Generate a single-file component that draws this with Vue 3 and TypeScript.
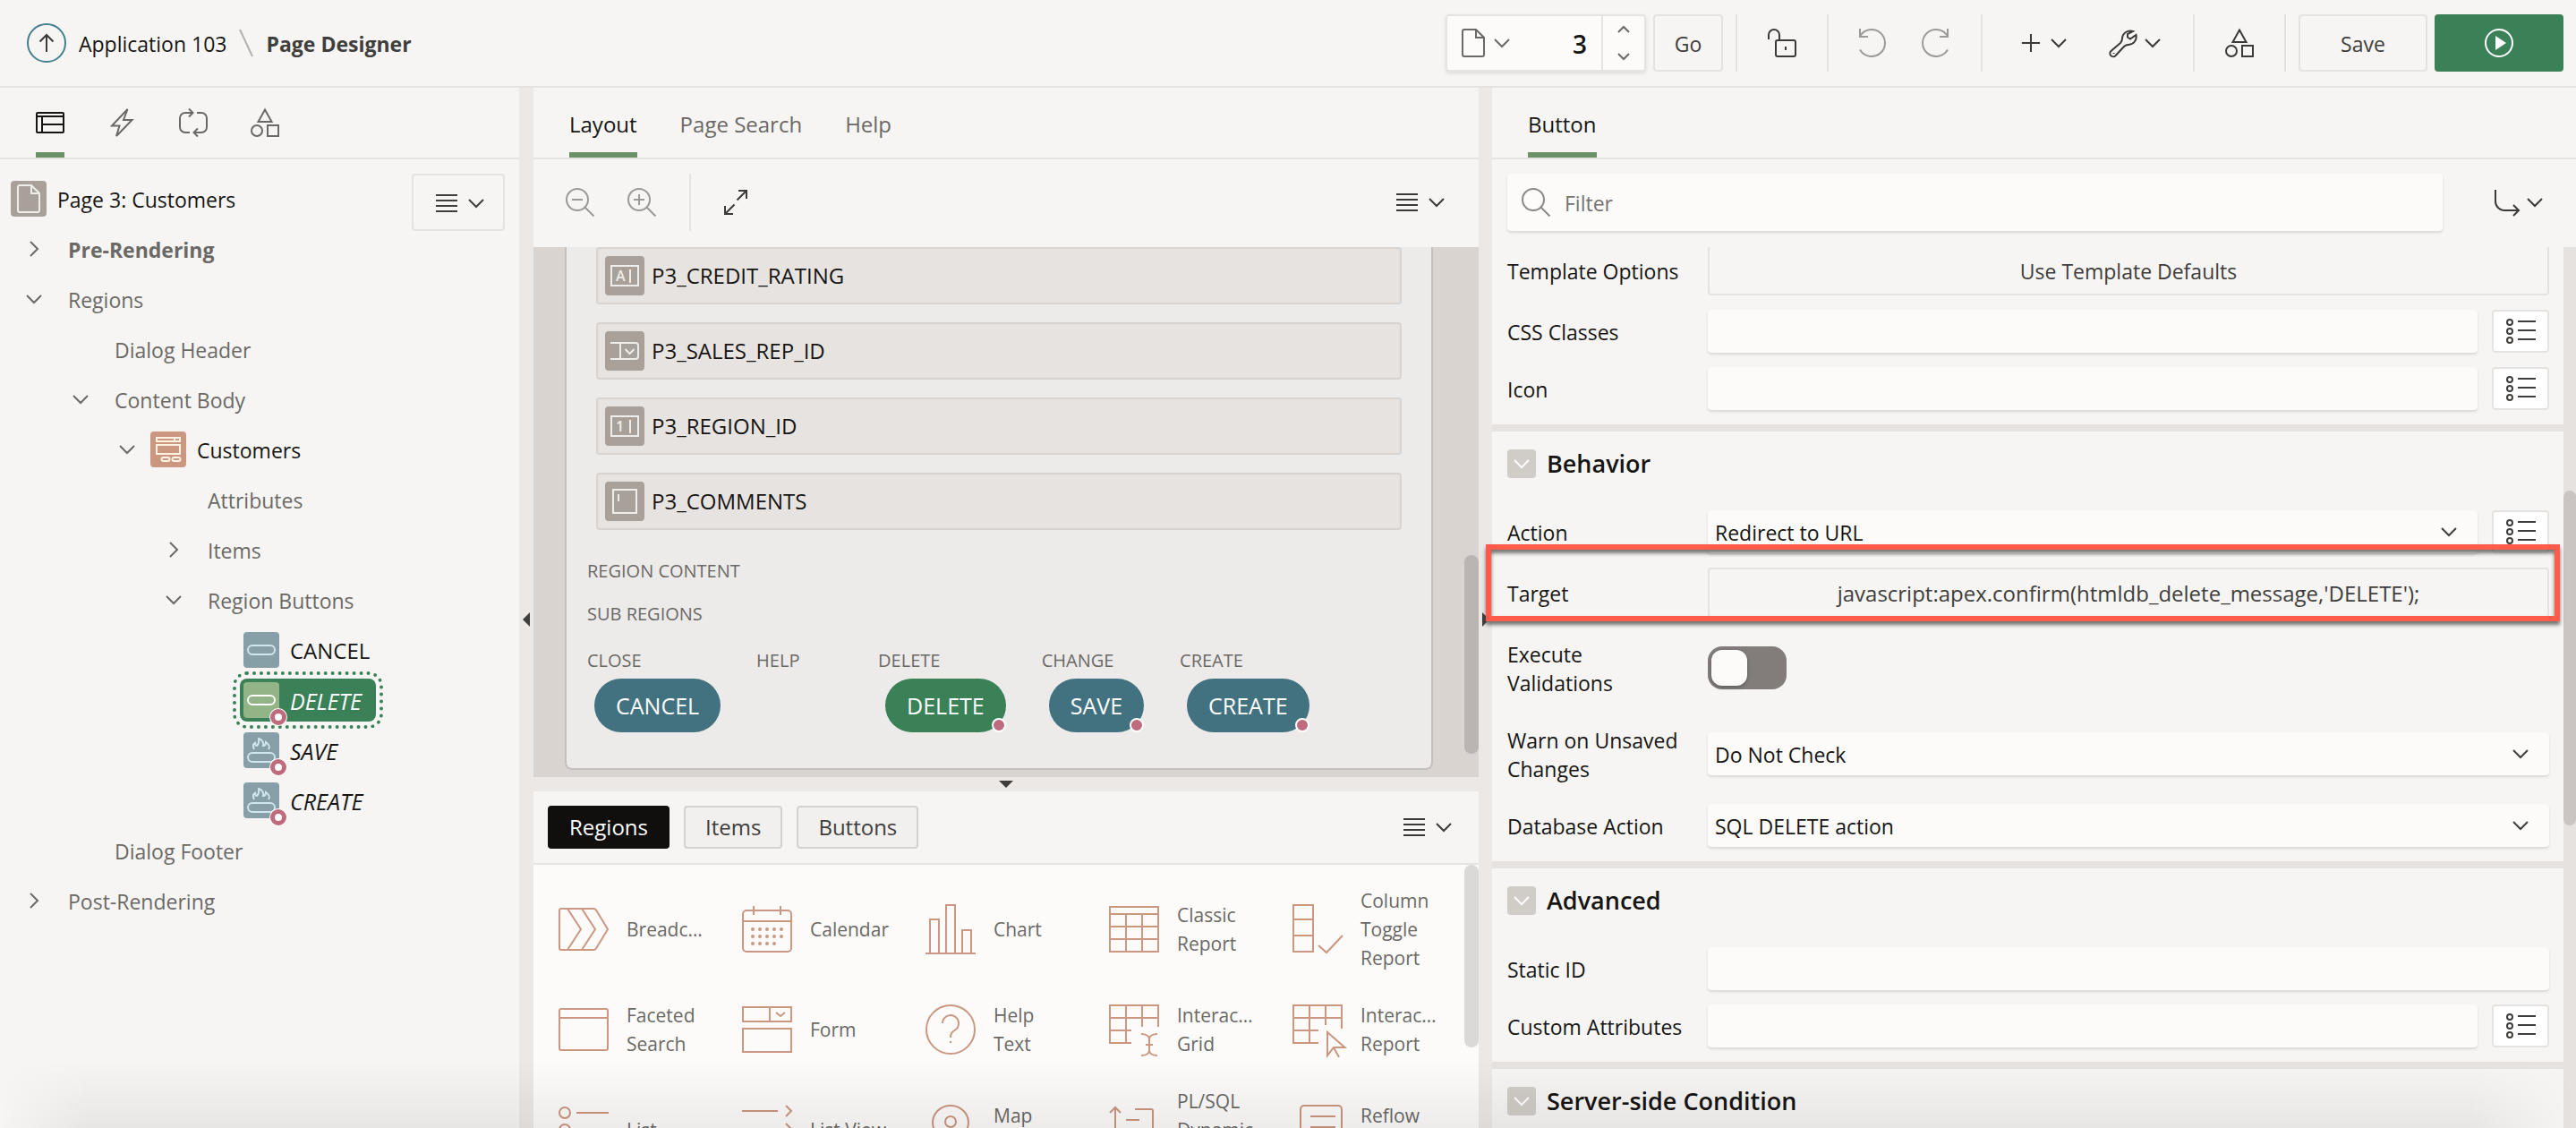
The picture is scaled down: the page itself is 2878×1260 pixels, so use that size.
<script setup lang="ts">
import { h, ref } from 'vue'

type IconDef = { w: number; h: number; d: string }

const circle = (cx: number, cy: number, r: number): string =>
  `M${cx - r} ${cy}a${r} ${r} 0 1 0 ${2 * r} 0a${r} ${r} 0 1 0 ${-2 * r} 0Z`

const dots = [28, 36, 44]
  .flatMap((y, row) => [12, 20, 28, 36, 44].slice(0, row === 2 ? 4 : 5).map((x) => circle(x, y, 1)))
  .join('')

const icons: Record<string, IconDef> = {
  up: { w: 44, h: 44, d: 'M22 32V13M14.5 20.5L22 13l7.5 7.5' },
  doc: { w: 26, h: 32, d: 'M3 1H16L25 10V29a2 2 0 0 1-2 2H3a2 2 0 0 1-2-2V3a2 2 0 0 1 2-2ZM16 1V10H25' },
  down: { w: 18, h: 10, d: 'M1 1l8 8 8-8' },
  right: { w: 10, h: 18, d: 'M1 1l8 8-8 8' },
  spinUp: { w: 14, h: 8, d: 'M1 7l6-6 6 6' },
  spinDown: { w: 14, h: 8, d: 'M1 1l6 6 6-6' },
  lock: { w: 32, h: 32, d: 'M1 12V7a6 6 0 0 1 12 0V13M11 13H29a2 2 0 0 1 2 2V29a2 2 0 0 1-2 2H11a2 2 0 0 1-2-2V15a2 2 0 0 1 2-2ZM20 20v4' },
  undo: { w: 30, h: 32, d: 'M1 0V9H10M1 8.5A15 15 0 1 1 1 23.5' },
  redo: { w: 30, h: 32, d: 'M29 0V9H20M29 8.5A15 15 0 1 0 29 23.5' },
  plus: { w: 20, h: 20, d: 'M10 0V20M0 10H20' },
  wrench: { w: 32, h: 32, d: 'M27 3A9 9 0 0 0 15 11C15 14 14.500 14.500 13 16L2.500 25A3.600 3.600 0 0 0 7.500 30.300L17 20C18.500 18.500 19 18.500 22 18A9 9 0 0 0 30.500 7L24 11.500L21 9.500V6ZM5.500 27v1' },
  shapes: { w: 32, h: 32, d: 'M16 1.500L23.500 15H8.500ZM19 19H31V31H19Z' + circle(7, 25, 6) },
  play: { w: 32, h: 32, d: circle(16, 16, 15) },
  layout: { w: 32, h: 32, d: 'M2 5H30a1 1 0 0 1 1 1V26a1 1 0 0 1-1 1H2a1 1 0 0 1-1-1V6a1 1 0 0 1 1-1ZM1 9H31M7 9V27M7 18H31' },
  bolt: { w: 32, h: 32, d: 'M22.500 1L5 19.500H13.500L10 31L27.500 13H18Z' },
  loop: { w: 32, h: 32, d: 'M12 27H7a6 6 0 0 1-6-6V11a6 6 0 0 1 6-6H15M11 0.500L15.500 5 11 9.500M20 5h5a6 6 0 0 1 6 6v10a6 6 0 0 1-6 6H17M21 22.500L16.500 27 21 31.500' },
  menu: { w: 24, h: 20, d: 'M0 1H24M0 7H24M0 13H24M0 19H24' },
  search: { w: 32, h: 32, d: circle(13, 13, 12) + 'M21.500 21.500L31.500 31.500' },
  zoomOut: { w: 32, h: 32, d: circle(13, 13, 12) + 'M21.500 21.500L31.500 31.500M7 13H19' },
  zoomIn: { w: 32, h: 32, d: circle(13, 13, 12) + 'M21.500 21.500L31.500 31.500M7 13H19M13 7V19' },
  expand: { w: 26, h: 28, d: 'M16 1H25V10M25 1L14.500 11.500M1 18V27H10M1 27L11.500 16.500' },
  goto: { w: 28, h: 28, d: 'M1 0V13A10 10 0 0 0 11 23H27M21 17l6 6-6 6' },
  list: { w: 34, h: 30, d: circle(5, 5, 3) + circle(5, 15, 3) + circle(5, 25, 3) + 'M14 4H34M14 14H34M14 24H34' },
  region: { w: 40, h: 40, d: 'M7 7H33V11H7ZM27 7V11M7 15H33V25H7ZM14.500 29H19.500a2 2 0 0 1 0 4H14.500a2 2 0 0 1 0-4ZM26.500 29H31.500a2 2 0 0 1 0 4H26.500a2 2 0 0 1 0-4Z' },
  button: { w: 40, h: 40, d: 'M10 15H30a5 5 0 0 1 0 10H10a5 5 0 0 1 0-10Z' },
  hotButton: { w: 40, h: 40, d: 'M10 23H30a5 5 0 0 1 0 10H10a5 5 0 0 1 0-10ZM12 19C10 15 11 13 13 12C13 14 14 15 15 15C18 12 17 9 17 7C21 8 23 12 22 15C24 15 25 13 25 11C29 14 30 16 28 19' },
  text: { w: 44, h: 44, d: 'M7 11H37V33H7ZM28 15V30' },
  select: { w: 44, h: 44, d: 'M6 13H34a3 3 0 0 1 3 3V28a3 3 0 0 1-3 3H6M17 13V31M22.500 20l5 5 5-5' },
  area: { w: 44, h: 44, d: 'M9 9H35V35H9ZM15 14V22' },
  breadcrumb: { w: 56, h: 56, d: 'M3 5H39Q41 5 42 6.500L55 28 42 49.500Q41 51 39 51H3a2 2 0 0 1-2-2V7a2 2 0 0 1 2-2ZM10 5L25 28 10 51M26 5L41 28 26 51' },
  calendar: { w: 56, h: 56, d: 'M5 7H51a4 4 0 0 1 4 4V49a4 4 0 0 1-4 4H5a4 4 0 0 1-4-4V11a4 4 0 0 1 4-4ZM1 19H55M13 2V12M43 2V12' + dots },
  chart: { w: 56, h: 56, d: 'M0 55H56M5 55V17H15V55M23 55V1H33V55M41 55V29H51V55' },
  classic: { w: 56, h: 56, d: 'M1 3H55V53H1ZM1 11H55M1 25H55M1 39H55M19 11V53M37 11V53' },
  columns: { w: 56, h: 56, d: 'M1 1H23V53H1ZM1 17H23M1 35H23M29 46l9 8L56 35' },
  faceted: { w: 56, h: 56, d: 'M3 5H53a2 2 0 0 1 2 2V49a2 2 0 0 1-2 2H3a2 2 0 0 1-2-2V7a2 2 0 0 1 2-2ZM1 15H55' },
  form: { w: 56, h: 56, d: 'M1 3H55V19H1ZM31 3V19M38 9l5 4 5-4M1 27H55V53H1Z' },
  help: { w: 56, h: 56, d: circle(28, 28, 27) + 'M19 21A9 9 0 1 1 33 28.500C30 30.500 28 32 28 37M28 41v2' },
  grid: { w: 56, h: 56, d: 'M25 43H1V1H55V25M1 15H55M1 29H25M19 1V43M37 1V25M36 33C41 33 45 35 45 39V51C45 55 41 57 36 57M54 33C49 33 45 35 45 39M45 51C45 55 49 57 54 57M41 45H49' },
  report: { w: 56, h: 56, d: 'M29 43H1V1H55V27M1 15H55M1 29H29M19 1V43M37 1V23M39 31V57L46 48H58.500ZM46 48L52 59' },
  listRegion: { w: 56, h: 56, d: circle(7, 9, 6) + circle(7, 28, 6) + circle(7, 47, 6) + 'M20 9H56M20 28H56M20 47H56' },
  listView: { w: 56, h: 56, d: 'M0 7H40M49 1l6 6-6 6M0 27H40M49 21l6 6-6 6M0 47H40M49 41l6 6-6 6' },
  map: { w: 56, h: 56, d: 'M28 55C22 44 8 32 8 20A20 19 0 0 1 48 20C48 32 34 44 28 55Z' + circle(28, 19, 6) },
  dynamic: { w: 56, h: 56, d: 'M7 50V2M1 9l6-6 6 6M29 5H47a2 2 0 0 1 2 2V40M19 17H34M19 29H34' },
  reflow: { w: 56, h: 56, d: 'M13 1H51a4 4 0 0 1 4 4V51a4 4 0 0 1-4 4H13a4 4 0 0 1-4-4V5a4 4 0 0 1 4-4ZM20 13H48M20 25H48M20 37H48' },
}

const Icon = (props: { name: string }) => {
  const icon = icons[props.name]
  return h(
    'svg',
    {
      width: icon.w,
      height: icon.h,
      viewBox: `0 0 ${icon.w} ${icon.h}`,
      fill: 'none',
      stroke: 'currentColor',
      'stroke-width': 2,
      'aria-hidden': 'true',
    },
    [h('path', { d: icon.d })],
  )
}

type TreeNode = {
  label: string
  level: number
  toggle?: 'down' | 'right'
  icon?: string
  bold?: boolean
  italic?: boolean
  badge?: boolean
  selected?: boolean
}

const nodes: TreeNode[] = [
  { label: 'Pre-Rendering', level: 0, toggle: 'right', bold: true },
  { label: 'Regions', level: 0, toggle: 'down' },
  { label: 'Dialog Header', level: 1 },
  { label: 'Content Body', level: 1, toggle: 'down' },
  { label: 'Customers', level: 2, toggle: 'down', icon: 'region' },
  { label: 'Attributes', level: 3 },
  { label: 'Items', level: 3, toggle: 'right' },
  { label: 'Region Buttons', level: 3, toggle: 'down' },
  { label: 'CANCEL', level: 4, icon: 'button' },
  { label: 'DELETE', level: 4, icon: 'button', italic: true, badge: true, selected: true },
  { label: 'SAVE', level: 4, icon: 'hotButton', italic: true, badge: true },
  { label: 'CREATE', level: 4, icon: 'hotButton', italic: true, badge: true },
  { label: 'Dialog Footer', level: 1 },
  { label: 'Post-Rendering', level: 0, toggle: 'right' },
]

const treeTabs = ['layout', 'bolt', 'loop', 'shapes']

const items = [
  { name: 'P3_CREDIT_RATING', icon: 'text', mark: 'A' },
  { name: 'P3_SALES_REP_ID', icon: 'select', mark: '' },
  { name: 'P3_REGION_ID', icon: 'text', mark: '1' },
  { name: 'P3_COMMENTS', icon: 'area', mark: '' },
]

const positions = [
  { slot: 'CLOSE', button: 'CANCEL', badge: false },
  { slot: 'HELP', button: '', badge: false },
  { slot: 'DELETE', button: 'DELETE', badge: true },
  { slot: 'CHANGE', button: 'SAVE', badge: true },
  { slot: 'CREATE', button: 'CREATE', badge: true },
]

const gallery = [
  { icon: 'breadcrumb', lines: ['Breadc…'] },
  { icon: 'calendar', lines: ['Calendar'] },
  { icon: 'chart', lines: ['Chart'] },
  { icon: 'classic', lines: ['Classic', 'Report'] },
  { icon: 'columns', lines: ['Column', 'Toggle', 'Report'] },
  { icon: 'faceted', lines: ['Faceted', 'Search'] },
  { icon: 'form', lines: ['Form'] },
  { icon: 'help', lines: ['Help', 'Text'] },
  { icon: 'grid', lines: ['Interac…', 'Grid'] },
  { icon: 'report', lines: ['Interac…', 'Report'] },
  { icon: 'listRegion', lines: ['List'] },
  { icon: 'listView', lines: ['List View'] },
  { icon: 'map', lines: ['Map', '\u00a0'] },
  { icon: 'dynamic', lines: ['PL/SQL', 'Dynamic', '\u00a0'] },
  { icon: 'reflow', lines: ['Reflow', '\u00a0'] },
]

type Field = { id: string; label: string; kind: 'button' | 'text' | 'select' | 'switch'; value?: string; picker?: boolean }
type Section = { title: string; fields: Field[] }

const sections: Section[] = [
  {
    title: '',
    fields: [
      { id: 'template-options', label: 'Template Options', kind: 'button', value: 'Use Template Defaults' },
      { id: 'css-classes', label: 'CSS Classes', kind: 'text', picker: true },
      { id: 'icon', label: 'Icon', kind: 'text', picker: true },
    ],
  },
  {
    title: 'Behavior',
    fields: [
      { id: 'action', label: 'Action', kind: 'select', value: 'Redirect to URL', picker: true },
      { id: 'target', label: 'Target', kind: 'button', value: "javascript:apex.confirm(htmldb_delete_message,'DELETE');" },
      { id: 'validations', label: 'Execute Validations', kind: 'switch' },
      { id: 'warn', label: 'Warn on Unsaved Changes', kind: 'select', value: 'Do Not Check' },
      { id: 'db-action', label: 'Database Action', kind: 'select', value: 'SQL DELETE action' },
    ],
  },
  {
    title: 'Advanced',
    fields: [
      { id: 'static-id', label: 'Static ID', kind: 'text' },
      { id: 'attributes', label: 'Custom Attributes', kind: 'text', picker: true },
    ],
  },
  { title: 'Server-side Condition', fields: [] },
]

const pageNumber = ref('3')
const filter = ref('')
const validations = ref(false)
</script>

<template>
  <div class="app">
    <header class="header">
      <nav class="crumbs" aria-label="Breadcrumb">
        <a href="#" class="up" aria-label="Up"><Icon name="up" /></a>
        <a href="#" class="crumb">Application 103</a>
        <svg class="slash" width="16" height="32" viewBox="0 0 16 32" fill="none" stroke="currentColor" stroke-width="2" aria-hidden="true"><path d="M1 1L15 31" /></svg>
        <span class="crumb current">Page Designer</span>
      </nav>
      <div class="tools">
        <div class="page-select">
          <button class="page-menu" aria-label="Page list"><Icon name="doc" /><Icon name="down" /></button>
          <input v-model="pageNumber" class="page-number" aria-label="Page number" />
          <div class="spin">
            <button aria-label="Next page"><Icon name="spinUp" /></button>
            <button aria-label="Previous page"><Icon name="spinDown" /></button>
          </div>
        </div>
        <button class="btn go">Go</button>
        <span class="rule"></span>
        <button class="tool lock" aria-label="Lock page"><Icon name="lock" /></button>
        <span class="rule"></span>
        <button class="tool dim undo" aria-label="Undo"><Icon name="undo" /></button>
        <button class="tool dim redo" aria-label="Redo"><Icon name="redo" /></button>
        <span class="rule"></span>
        <button class="tool create" aria-label="Create"><Icon name="plus" /><Icon name="down" /></button>
        <button class="tool utilities" aria-label="Utilities"><Icon name="wrench" /><Icon name="down" /></button>
        <span class="rule"></span>
        <button class="tool shared" aria-label="Shared components"><Icon name="shapes" /></button>
        <span class="rule"></span>
        <button class="btn save">Save</button>
        <button class="run" aria-label="Save and run page">
          <Icon name="play" /><span class="triangle"></span>
        </button>
      </div>
    </header>

    <main class="panes">
      <section class="pane">
        <div class="tabs">
          <button v-for="(tab, i) in treeTabs" :key="tab" class="icon-tab" :class="{ active: i === 0 }" :aria-label="tab">
            <Icon :name="tab" />
          </button>
        </div>
        <div class="tree">
          <div class="root">
            <div class="node strong">
              <span class="node-icon page"><Icon name="doc" /></span>
              <span class="node-label">Page 3: Customers</span>
            </div>
            <button class="btn tree-menu" aria-label="Tree menu"><Icon name="menu" /><Icon name="down" /></button>
          </div>
          <ul>
            <li v-for="node in nodes" :key="node.label + node.level" :class="'level-' + node.level">
              <span class="toggle">
                <button v-if="node.toggle" :aria-label="'Toggle ' + node.label"><Icon :name="node.toggle" /></button>
              </span>
              <span class="node" :class="{ strong: node.icon, caps: node.level === 4, bold: node.bold, italic: node.italic, selected: node.selected, plain: !node.icon }">
                <span v-if="node.icon" class="node-icon" :class="node.icon">
                  <Icon :name="node.icon" />
                  <i v-if="node.badge" class="ring"></i>
                </span>
                <span class="node-label">{{ node.label }}</span>
              </span>
            </li>
          </ul>
        </div>
      </section>

      <div class="splitter"><i class="arrow left"></i></div>

      <section class="pane">
        <div class="tabs">
          <button class="tab active">Layout</button>
          <button class="tab">Page Search</button>
          <button class="tab">Help</button>
        </div>
        <div class="layout-bar">
          <button class="tool dim" aria-label="Zoom out"><Icon name="zoomOut" /></button>
          <button class="tool dim" aria-label="Zoom in"><Icon name="zoomIn" /></button>
          <span class="rule"></span>
          <button class="tool" aria-label="Expand"><Icon name="expand" /></button>
          <button class="tool menu" aria-label="Layout menu"><Icon name="menu" /><Icon name="down" /></button>
        </div>
        <div class="canvas">
          <div class="card">
            <div class="items">
              <div v-for="item in items" :key="item.name" class="item">
                <span class="item-icon"><Icon :name="item.icon" /><b v-if="item.mark">{{ item.mark }}</b></span>
                <span>{{ item.name }}</span>
              </div>
            </div>
            <p class="slot">REGION CONTENT</p>
            <p class="slot">SUB REGIONS</p>
            <div class="positions">
              <div v-for="pos in positions" :key="pos.slot" class="position">
                <span class="slot-name">{{ pos.slot }}</span>
                <button v-if="pos.button" class="pill" :class="{ chosen: pos.button === 'DELETE' }">
                  {{ pos.button }}<i v-if="pos.badge" class="dot"></i>
                </button>
              </div>
            </div>
          </div>
          <i class="thumb"></i>
        </div>
        <div class="h-splitter"><i class="arrow bottom"></i></div>
        <div class="gallery-bar">
          <button class="chip on">Regions</button>
          <button class="chip">Items</button>
          <button class="chip">Buttons</button>
          <button class="tool menu" aria-label="Gallery menu"><Icon name="menu" /><Icon name="down" /></button>
        </div>
        <div class="gallery">
          <div v-for="(entry, i) in gallery" :key="i" class="entry">
            <Icon :name="entry.icon" />
            <span class="entry-name"><span v-for="line in entry.lines" :key="line">{{ line }}</span></span>
          </div>
          <i class="thumb light"></i>
        </div>
      </section>

      <div class="splitter"><i class="arrow right"></i></div>

      <section class="pane">
        <div class="tabs"><button class="tab active">Button</button></div>
        <div class="filter-bar">
          <label class="filter">
            <Icon name="search" />
            <input v-model="filter" placeholder="Filter" aria-label="Filter properties" />
          </label>
          <button class="tool" aria-label="Go to group"><Icon name="goto" /><Icon name="down" /></button>
        </div>
        <div class="properties">
          <div class="groups">
            <section v-for="section in sections" :key="section.title" class="group">
              <h2 v-if="section.title">
                <button class="collapse" :aria-label="'Collapse ' + section.title"><Icon name="down" /></button>
                {{ section.title }}
              </h2>
              <div v-for="field in section.fields" :key="field.id" class="field" :class="{ marked: field.id === 'target' }">
                <label :for="field.id">{{ field.label }}</label>
                <div class="control">
                  <button v-if="field.kind === 'button'" :id="field.id" class="btn wide">{{ field.value }}</button>
                  <input v-else-if="field.kind === 'text'" :id="field.id" class="box" type="text" />
                  <span v-else-if="field.kind === 'select'" class="select">
                    <select :id="field.id" class="box"><option>{{ field.value }}</option></select>
                    <Icon name="down" />
                  </span>
                  <input v-else :id="field.id" v-model="validations" class="switch" type="checkbox" />
                  <button v-if="field.picker" class="picker" :aria-label="'Pick ' + field.label"><Icon name="list" /></button>
                </div>
              </div>
            </section>
          </div>
          <div class="track"><i></i></div>
        </div>
      </section>
    </main>
    <div class="fade"></div>
  </div>
</template>

<style>
html,
body {
  background: #f6f5f3;
}
</style>

<style scoped>
.app {
  position: relative;
  display: flex;
  flex-direction: column;
  height: 100vh;
  overflow: hidden;
  background: #f6f5f3;
  color: #161513;
  font-family: "Open Sans", "Noto Sans", sans-serif;
  font-size: 23px;
  line-height: 32px;
}
.app *,
.app {
  box-sizing: border-box;
}
button,
input,
select {
  font: inherit;
  color: inherit;
  margin: 0;
  padding: 0;
  border: 0;
  background: none;
}
button {
  display: flex;
  align-items: center;
  justify-content: center;
}
svg {
  flex: none;
  overflow: visible;
}

/* Header */
.header {
  display: flex;
  justify-content: space-between;
  flex: none;
  height: 98px;
  padding: 16px 14px 16px 30px;
  border-bottom: 2px solid #e5e3e1;
}
.crumbs {
  display: flex;
  align-items: center;
}
.up {
  width: 44px;
  height: 44px;
  border: 2px solid #427f8f;
  border-radius: 50%;
  color: #3c3a38;
}
.up svg {
  margin: -2px;
}
.crumb {
  margin-left: 14px;
  padding-top: 2px;
  color: #161513;
  text-decoration: none;
}
.slash {
  margin-left: 14px;
  color: #b3b1af;
}
.crumb.current {
  font-weight: 700;
  color: #403e3c;
}
.tools {
  display: flex;
  height: 64px;
  color: #3c3a38;
}
.page-select {
  display: flex;
  width: 224px;
  border: 2px solid #e6e4e2;
  border-radius: 4px;
  background: #fcfbfa;
  box-shadow: 0 2px 4px #0000001a;
}
.page-menu {
  gap: 10px;
  margin-left: 16px;
  color: #6b6966;
}
.page-number {
  flex: 1;
  min-width: 0;
  padding: 2px 16px 0 0;
  color: #161513;
  font-size: 28px;
  font-weight: 600;
  text-align: right;
}
.spin {
  display: flex;
  flex-direction: column;
  width: 48px;
  border-left: 2px solid #e6e4e2;
  color: #6b6966;
}
.spin button {
  flex: 1;
}
.btn {
  padding-top: 2px;
  border: 2px solid #e5e3e1;
  border-radius: 4px;
  color: #403e3c;
}
.go {
  width: 78px;
  margin: 0 14px 0 8px;
}
.rule {
  width: 2px;
  height: 64px;
  background: #e5e3e1;
}
.dim {
  color: #9c9a98;
}
.lock,
.shared {
  width: 100px;
}
.undo {
  margin-left: 34px;
}
.redo {
  margin: 0 36px 0 40px;
}
.create,
.utilities {
  gap: 12px;
}
.create {
  margin: 0 47px 0 44px;
}
.utilities {
  gap: 8px;
  margin-right: 36px;
}
.save {
  width: 144px;
  margin: 0 8px 0 14px;
}
.run {
  position: relative;
  width: 144px;
  border-radius: 4px;
  background: #3a8157;
  color: #fff;
}
.triangle {
  position: absolute;
  left: 68px;
  top: 24px;
  border: 8px solid transparent;
  border-left: 12px solid #fff;
  border-right: 0;
}

/* Panes */
.panes {
  display: grid;
  grid-template-columns: 580fr 16px 1056fr 15px 1211fr;
  flex: 1;
  min-height: 0;
}
.pane {
  display: flex;
  flex-direction: column;
  min-width: 0;
  min-height: 0;
}
.splitter,
.h-splitter {
  display: flex;
  justify-content: center;
  background: #ece8e5;
}
.arrow {
  width: 0;
  height: 0;
  border: 8px solid transparent;
}
.arrow.left {
  margin-top: 586px;
  border-right-color: #403e3c;
  border-left: 0;
}
.arrow.right {
  margin-top: 586px;
  border-left-color: #403e3c;
  border-right: 0;
}
.arrow.bottom {
  margin-top: 4px;
  border-top-color: #403e3c;
  border-bottom: 0;
}
.tabs {
  display: flex;
  flex: none;
  gap: 48px;
  height: 80px;
  padding: 0 40px;
  border-bottom: 2px solid #e5e3e1;
}
.tab,
.icon-tab {
  border-bottom: 6px solid transparent;
  color: #6b6966;
}
.tab {
  padding-top: 10px;
  font-size: 24px;
}
.icon-tab {
  padding-top: 8px;
  padding-bottom: 2px;
}
.tab.active,
.icon-tab.active {
  border-bottom-color: #6b9267;
  color: #161513;
}

/* Tree */
.tree {
  padding-top: 16px;
  color: #6b6966;
}
.root {
  display: flex;
  justify-content: space-between;
  height: 56px;
  padding: 0 16px 0 12px;
}
.tree-menu {
  gap: 12px;
  width: 104px;
  height: 64px;
  padding-left: 4px;
}
ul {
  margin: 0;
  padding: 0;
  list-style: none;
}
li {
  display: flex;
  height: 56px;
}
.level-1 {
  padding-left: 52px;
}
.level-2 {
  padding-left: 104px;
}
.level-3 {
  padding-left: 156px;
}
.level-4 {
  padding-left: 208px;
}
.toggle {
  display: flex;
  align-items: center;
  justify-content: center;
  width: 64px;
  padding-left: 12px;
}
.node {
  display: flex;
  align-items: center;
  gap: 12px;
}
.node-label {
  padding-top: 2px;
}
.node.plain {
  padding-left: 12px;
}
.strong {
  color: #161513;
}
.bold {
  font-weight: 700;
}
.caps {
  font-size: 24px;
}
.italic {
  font-size: 25px;
  font-style: italic;
}
.node-icon {
  position: relative;
  display: flex;
  align-items: center;
  justify-content: center;
  width: 40px;
  height: 40px;
  border-radius: 4px;
  background: #87a0a7;
  color: #cfe6ee;
}
.node-icon.page {
  background: #a8a199;
  color: #efedea;
}
.node-icon.region {
  background: #cb9780;
  color: #fdf3e0;
}
.ring {
  position: absolute;
  right: -8px;
  bottom: -8px;
  width: 18px;
  height: 18px;
  border: 5px solid #bf6a7d;
  border-radius: 50%;
  background: #fff;
  box-shadow: 0 0 0 1px #fff;
}
.selected {
  height: 48px;
  margin: 4px 0 4px -4px;
  padding: 4px 16px 4px 4px;
  border-radius: 8px;
  background: #3a8157;
  color: #fff;
  outline: 4px dotted #3a8157;
  outline-offset: 4px;
}
.selected .node-icon {
  background: #93b487;
  color: #fff;
}

/* Layout editor */
.layout-bar {
  display: flex;
  flex: none;
  gap: 37px;
  height: 98px;
  padding: 16px 38px 18px 36px;
  color: #3c3a38;
}
.menu {
  gap: 12px;
  margin-left: auto;
  color: #3c3a38;
}
.canvas {
  position: relative;
  flex: none;
  height: 592px;
  padding: 0 51px 8px 35px;
  overflow: hidden;
  background: #d9d4d0;
}
.card {
  height: 584px;
  padding: 0 23px;
  border: 2px solid #c6bfbe;
  border-top: 0;
  border-radius: 0 0 8px 8px;
  background: #ecebea;
}
.items {
  display: grid;
  gap: 20px;
  margin: 0 10px 30px;
}
.item {
  display: flex;
  align-items: center;
  gap: 8px;
  height: 64px;
  padding: 0 8px;
  border: 2px solid #d9d3d0;
  border-radius: 4px;
  background: #e7e3e0;
  font-size: 24px;
}
.item-icon {
  position: relative;
  display: flex;
  width: 44px;
  height: 44px;
  border-radius: 4px;
  background: #a8a199;
  color: #efedea;
}
.item-icon b {
  position: absolute;
  left: 12px;
  top: 6px;
  font-size: 16px;
  font-weight: 600;
}
.slot {
  margin: 0 0 16px;
  color: #6b6966;
  font-size: 20px;
}
.positions {
  display: flex;
  gap: 40px;
  padding-top: 4px;
}
.position {
  min-width: 96px;
}
.slot-name {
  display: block;
  margin-bottom: 4px;
  color: #6b6966;
  font-size: 20px;
}
.pill {
  position: relative;
  height: 60px;
  margin-left: 8px;
  padding: 0 24px;
  border-radius: 30px;
  background: #42727f;
  color: #fff;
  font-size: 25px;
}
.pill.chosen {
  background: #3a8157;
}
.dot {
  position: absolute;
  right: 0;
  bottom: 0;
  width: 16px;
  height: 16px;
  border: 2px solid #fff;
  border-radius: 50%;
  background: #bf6a7d;
}
.thumb {
  position: absolute;
  right: 0;
  top: 344px;
  width: 16px;
  height: 222px;
  border-radius: 8px;
  background: #bab5b2;
}
.thumb.light {
  top: 0;
  height: 204px;
  background: #dad9d8;
}
.h-splitter {
  flex: none;
  height: 16px;
}
.gallery-bar {
  display: flex;
  align-items: center;
  flex: none;
  gap: 16px;
  height: 82px;
  padding: 0 30px 0 16px;
  border-bottom: 2px solid #e5e3e1;
}
.chip {
  height: 48px;
  padding: 0 22px;
  border: 2px solid #d4d2d0;
  border-radius: 4px;
  background: #f1f0ee;
  color: #403e3c;
  font-size: 24px;
}
.chip.on {
  border-color: #100f0e;
  background: #100f0e;
  color: #fff;
}
.gallery {
  position: relative;
  display: grid;
  grid-template-columns: repeat(5, minmax(0, 1fr));
  grid-auto-rows: 112px;
  flex: 1;
  min-height: 0;
  padding: 16px 3px 0 28px;
  overflow: hidden;
  background: #fcfbfa;
  color: #cb9780;
}
.entry {
  display: flex;
  align-items: center;
  gap: 20px;
}
.entry-name {
  display: grid;
  color: #6b6966;
  font-size: 21px;
  white-space: nowrap;
}

/* Property editor */
.filter-bar {
  display: flex;
  flex: none;
  justify-content: space-between;
  height: 98px;
  padding: 16px 37px 18px 17px;
  color: #3c3a38;
}
.filter-bar .tool {
  gap: 8px;
}
.filter {
  display: flex;
  align-items: center;
  gap: 16px;
  flex: 1;
  margin-right: 58px;
  padding: 0 16px;
  border-radius: 4px;
  background: #fcfbfa;
  box-shadow: 0 2px 3px #0000001f;
  color: #8b8986;
}
.filter input {
  flex: 1;
  padding-top: 2px;
  outline: 0;
}
.filter input::placeholder {
  color: #757370;
  opacity: 1;
}
.properties {
  display: flex;
  flex: 1;
  min-height: 0;
  clip-path: inset(0 0 0 -12px);
}
.groups {
  flex: 1;
  margin-top: -10px;
}
.group {
  padding: 0 16px 8px 17px;
  border-bottom: 8px solid #e6e2df;
}
.group:last-child {
  border-bottom: 0;
}
h2 {
  display: flex;
  align-items: center;
  gap: 12px;
  height: 72px;
  margin: 0 0 8px;
  font-size: 27px;
  font-weight: 600;
}
.collapse {
  width: 32px;
  height: 32px;
  border-radius: 4px;
  background: #d0cdc8;
  color: #fff;
}
.field {
  position: relative;
  display: flex;
  align-items: center;
}
.field label {
  flex: none;
  width: 224px;
  padding: 17px 20px 15px 0;
}
.control {
  display: flex;
  flex: 1;
  gap: 16px;
  padding: 8px 0;
}
.wide {
  flex: 1;
  height: 56px;
}
.box {
  flex: 1;
  width: 100%;
  min-width: 0;
  height: 48px;
  padding: 2px 8px 0;
  border-radius: 4px;
  background: #fcfbfa;
  box-shadow: 0 2px 3px #0000001f;
}
.select {
  position: relative;
  display: flex;
  flex: 1;
}
.select select {
  appearance: none;
}
.select svg {
  position: absolute;
  right: 23px;
  top: 19px;
  color: #403e3c;
}
.picker {
  width: 64px;
  height: 48px;
  border: 2px solid #e5e3e1;
  border-radius: 4px;
  background: #fff;
  color: #403e3c;
}
.switch {
  appearance: none;
  display: flex;
  align-items: center;
  width: 88px;
  height: 48px;
  padding: 0 4px;
  border-radius: 16px;
  background: #827d7a;
}
.switch::before {
  content: "";
  width: 40px;
  height: 40px;
  border-radius: 12px;
  background: #fcfbfa;
  box-shadow: 0 2px 4px #00000040;
}
.marked .wide {
  font-size: 24px;
}
.marked::after {
  content: "";
  position: absolute;
  inset: -18px -12px 4px -24px;
  border: 6px solid #ff5b4c;
  box-shadow: 0 4px 4px #4a4a48c0, inset 0 4px 4px #4a4a48c0;
  pointer-events: none;
}
.track {
  width: 14px;
  padding-top: 272px;
  background: #e6e2df;
}
.track i {
  display: block;
  height: 374px;
  border-radius: 8px;
  background: #cac4c3;
}
.fade {
  position: absolute;
  left: 0;
  right: 0;
  bottom: 0;
  height: 76px;
  background: linear-gradient(#00000000, #0000000f);
  mask-image: linear-gradient(90deg, #0000, #000 100px, #000 calc(100% - 120px), #0000);
  pointer-events: none;
}
</style>
